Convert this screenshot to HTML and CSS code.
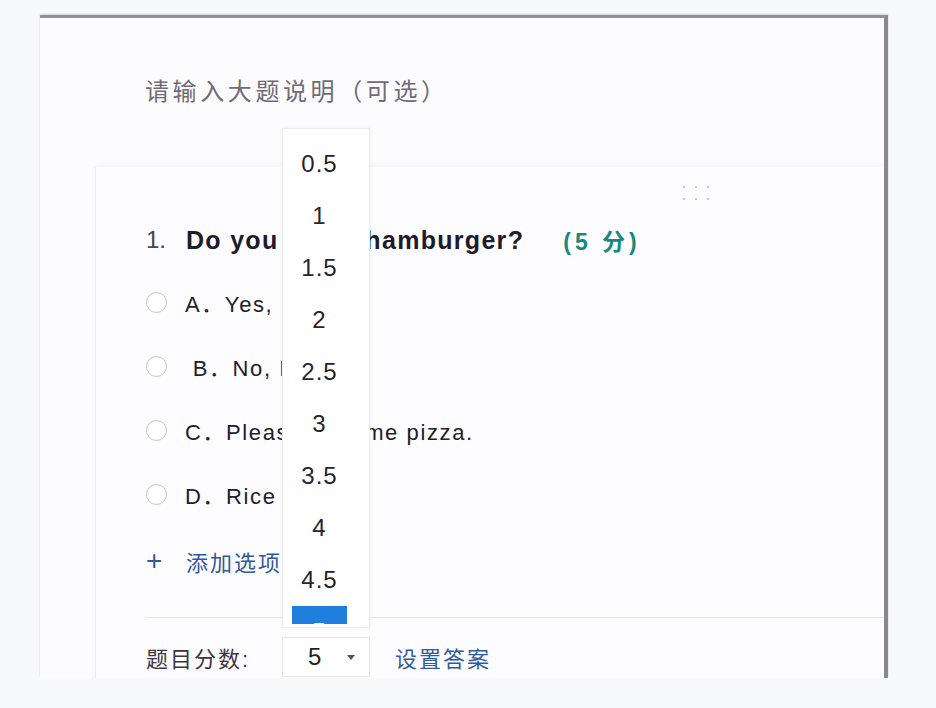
FILE: index.html
```html
<!DOCTYPE html>
<html lang="zh-CN">
<head>
  <meta charset="UTF-8">
  <meta name="viewport" content="width=device-width, initial-scale=1.0">
  <title>大题编辑</title>
  <link rel="stylesheet" href="styles.css">
</head>
<body>

  <section class="sheet">
    <p class="desc">请输入大题说明（可选）</p>

    <div class="card">
      <div class="handle">
        <i></i><i></i><i></i>
        <i></i><i></i><i></i>
      </div>

      <div class="q-title">
        <span class="q-no">1.</span>
        <span class="q-text">Do you like a hamburger?</span>
        <span class="q-score">(5 分)</span>
      </div>

      <ul class="options">
        <li class="opt"><span class="radio"></span><span class="opt-text">A．Yes, I do.</span></li>
        <li class="opt"><span class="radio"></span><span class="opt-text">&nbsp;B．No, I don't.</span></li>
        <li class="opt"><span class="radio"></span><span class="opt-text">C．Please give me pizza.</span></li>
        <li class="opt"><span class="radio"></span><span class="opt-text">D．Rice is OK</span></li>
      </ul>

      <div class="add-opt"><span class="plus">+</span>添加选项</div>

      <div class="footer">
        <span class="score-label">题目分数:</span>
        <div class="select">
          <span class="select-value">5</span>
          <span class="caret"></span>

          <div class="dropdown">
            <ul class="drop-list">
              <li>0.5</li>
              <li>1</li>
              <li>1.5</li>
              <li>2</li>
              <li>2.5</li>
              <li>3</li>
              <li>3.5</li>
              <li>4</li>
              <li>4.5</li>
              <li class="active">5</li>
            </ul>
          </div>
        </div>
        <a class="set-answer">设置答案</a>
      </div>
    </div>
  </section>

</body>
</html>
```

FILE: styles.css
```css
* {
  box-sizing: border-box;
}
body {
  margin: 0;
  padding: 15px 0 0 40px;
  background: #f8f9fb;
  font-family: "Liberation Sans", "Noto Sans CJK SC", sans-serif;
  color: #231d2c;
}
ul {
  margin: 0;
  padding: 0;
  list-style: none;
}

.sheet {
  width: 848px;
  height: 663px;
  background: #fcfcfe;
  border-top: 3px solid #929294;
  border-right: 4px solid #8a888e;
  box-shadow: 0 -1px 2px rgba(0, 0, 0, 0.15);
  overflow: hidden;
}
.desc {
  margin: 0;
  padding: 59px 0 0 105px;
  font-size: 24px;
  line-height: 30px;
  letter-spacing: 3.6px;
  color: #716a76;
}

.card {
  margin: 60px 0 0 55px;
  padding-left: 50px;
  height: 600px;
  background: #fdfdff;
  border-left: 1px solid #ececf0;
  box-shadow: 0 -2px 6px rgba(0, 0, 0, 0.04);
}

/* drag handle */
.handle {
  height: 53px;
  padding: 19px 0 0 537px;
  display: grid;
  grid-template-columns: repeat(3, 2px);
  grid-auto-rows: 2px;
  column-gap: 10px;
  row-gap: 10px;
}
.handle i {
  background: #b9b9c0;
  border-radius: 50%;
}

.q-title {
  display: flex;
  align-items: center;
  height: 40px;
  font-size: 25px;
}
.q-no {
  width: 40px;
  color: #4a4450;
  font-size: 24px;
}
.q-text {
  font-weight: bold;
  letter-spacing: 1.3px;
  color: #201a2a;
}
.q-score {
  margin-left: 39px;
  font-size: 23px;
  letter-spacing: 4px;
  color: #17897c;
  font-weight: bold;
}

.options {
  margin-top: 10px;
}
.opt {
  height: 64px;
  display: flex;
  align-items: center;
  font-size: 22px;
  letter-spacing: 1.6px;
}
.radio {
  width: 21px;
  height: 21px;
  border: 1px solid #c4c4c8;
  border-radius: 50%;
  background: #fff;
  margin-right: 18px;
}
.opt-text {
  color: #221c2b;
}

.add-opt {
  height: 70px;
  display: flex;
  align-items: center;
  font-size: 22px;
  letter-spacing: 2px;
  color: #33599a;
}
.plus {
  width: 40px;
  font-size: 28px;
  font-weight: 300;
}

.footer {
  margin-top: 21px;
  border-top: 1px solid #e8e8ec;
  padding-top: 19px;
  display: flex;
  align-items: center;
  font-size: 22px;
}
.score-label {
  width: 136px;
  letter-spacing: 2px;
  color: #3d3545;
}
.select {
  position: relative;
  width: 88px;
  height: 40px;
  border: 1px solid #e6e6ea;
  background: #fff;
  display: flex;
  align-items: center;
  padding: 0 14px 0 25px;
}
.select-value {
  font-size: 24px;
  color: #222;
}
.caret {
  margin-left: auto;
  width: 0;
  height: 0;
  border-left: 4px solid transparent;
  border-right: 4px solid transparent;
  border-top: 5px solid #555;
}
.set-answer {
  margin-left: 25px;
  letter-spacing: 2px;
  color: #2f5b9e;
}

/* score dropdown, opened above the select */
.dropdown {
  position: absolute;
  left: -1px;
  bottom: calc(100% + 10px);
  width: 88px;
  height: 500px;
  padding: 9px 0 3px 9px;
  background: #fff;
  border: 1px solid #ececf0;
  box-shadow: 0 0 4px rgba(0, 0, 0, 0.06);
}
.drop-list {
  height: 100%;
  overflow: hidden;
  width: 55px;
}
.drop-list li {
  height: 52px;
  display: flex;
  align-items: center;
  justify-content: center;
  font-size: 24px;
  letter-spacing: 1px;
  color: #2a2430;
}
.drop-list li.active {
  background: #1f7fdf;
  color: #fff;
}
```
